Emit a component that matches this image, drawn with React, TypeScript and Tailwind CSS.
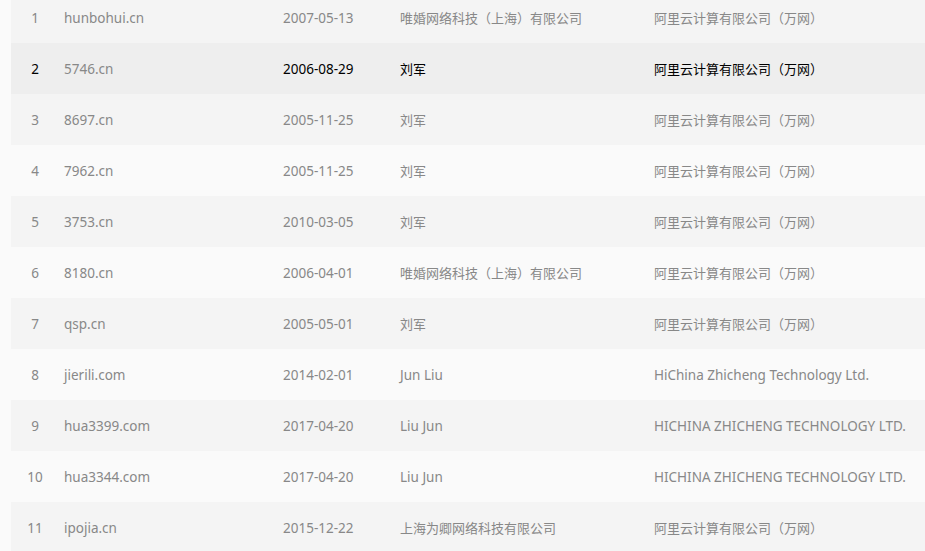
import React from 'react';

type Row = {
  id: number;
  domain: string;
  date: string;
  owner: string;
  registrar: string;
};

const rows: Row[] = [
  { id: 1, domain: 'hunbohui.cn', date: '2007-05-13', owner: '唯婚网络科技（上海）有限公司', registrar: '阿里云计算有限公司（万网）' },
  { id: 2, domain: '5746.cn', date: '2006-08-29', owner: '刘军', registrar: '阿里云计算有限公司（万网）' },
  { id: 3, domain: '8697.cn', date: '2005-11-25', owner: '刘军', registrar: '阿里云计算有限公司（万网）' },
  { id: 4, domain: '7962.cn', date: '2005-11-25', owner: '刘军', registrar: '阿里云计算有限公司（万网）' },
  { id: 5, domain: '3753.cn', date: '2010-03-05', owner: '刘军', registrar: '阿里云计算有限公司（万网）' },
  { id: 6, domain: '8180.cn', date: '2006-04-01', owner: '唯婚网络科技（上海）有限公司', registrar: '阿里云计算有限公司（万网）' },
  { id: 7, domain: 'qsp.cn', date: '2005-05-01', owner: '刘军', registrar: '阿里云计算有限公司（万网）' },
  { id: 8, domain: 'jierili.com', date: '2014-02-01', owner: 'Jun Liu', registrar: 'HiChina Zhicheng Technology Ltd.' },
  { id: 9, domain: 'hua3399.com', date: '2017-04-20', owner: 'Liu Jun', registrar: 'HICHINA ZHICHENG TECHNOLOGY LTD.' },
  { id: 10, domain: 'hua3344.com', date: '2017-04-20', owner: 'Liu Jun', registrar: 'HICHINA ZHICHENG TECHNOLOGY LTD.' },
  { id: 11, domain: 'ipojia.cn', date: '2015-12-22', owner: '上海为卿网络科技有限公司', registrar: '阿里云计算有限公司（万网）' },
];

// chinese names render a little smaller than latin text
const isCjk = (s: string) => /[\u4e00-\u9fff]/.test(s);

export default function App() {
  return (
    <div className="h-[551px] w-[925px] overflow-hidden bg-[#fafafa] pl-[11px] font-['Noto_Sans','Noto_Sans_CJK_SC',sans-serif] text-[13.5px]">
      <div className="-mt-[8px]">
        {rows.map((r) => {
          // row 2 is the hovered one
          const active = r.id === 2;
          const bg = active ? 'bg-[#eeeeee]' : r.id % 2 === 1 ? 'bg-[#f4f4f4]' : 'bg-[#fafafa]';
          const tone = active ? 'text-black' : 'text-[#888888]';
          return (
            <div
              key={r.id}
              className={`grid h-[51px] grid-cols-[53px_219px_117px_254px_1fr] items-center pt-[2px] leading-none ${bg}`}
            >
              <span className={`w-12 text-center ${tone}`}>{r.id}</span>
              <span className="text-[#888888]">{r.domain}</span>
              <span className={tone}>{r.date}</span>
              <span className={`${isCjk(r.owner) ? 'text-[13px]' : ''} ${tone}`}>{r.owner}</span>
              <span className={`whitespace-nowrap ${isCjk(r.registrar) ? 'text-[13px]' : ''} ${tone}`}>
                {r.registrar}
              </span>
            </div>
          );
        })}
      </div>
    </div>
  );
}
